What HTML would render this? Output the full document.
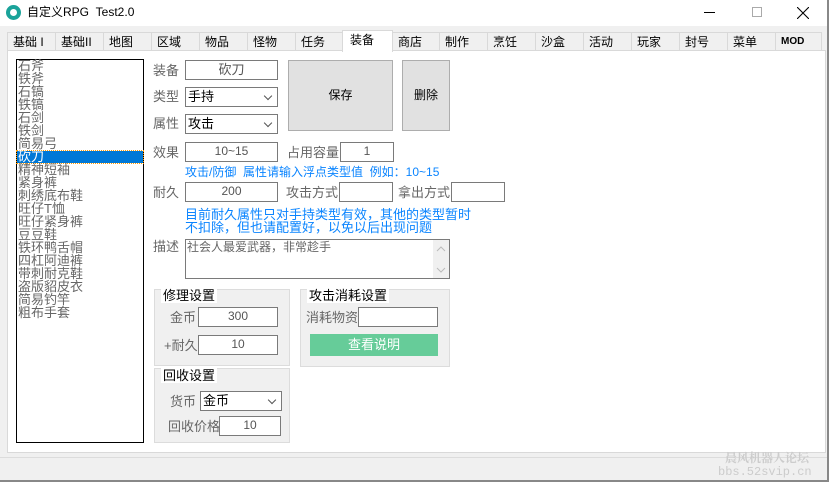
<!DOCTYPE html>
<html><head><meta charset="utf-8"><style>
*{margin:0;padding:0;box-sizing:border-box}
body{width:829px;height:482px;background:#f0f0f0;position:relative;overflow:hidden;font-family:"Liberation Sans","Noto Sans CJK SC","WenQuanYi Zen Hei",sans-serif;font-size:12px;color:#000}
.a{position:absolute}
.t{position:absolute;white-space:nowrap;line-height:14px}
.g{color:#666}
.in{position:absolute;background:#fff;border:1px solid #7a7a7a;text-align:center;color:#555;line-height:17px;font-size:12px}
.sel{position:absolute;background:#fff;border:1px solid #7a7a7a;padding-left:2px;line-height:17px;font-size:13px}
.sel:after{content:"";position:absolute;right:6px;top:5px;width:5px;height:5px;border-right:1px solid #555;border-bottom:1px solid #555;transform:rotate(45deg)}
.tab{position:absolute;top:32px;height:19px;border:1px solid #d9d9d9;border-bottom:none;background:#f0f0f0;padding-left:5px;line-height:18px;font-size:12px}
.blue{color:#0a84ff}
.grp{position:absolute;background:#f0f0f0;border:1px solid #dcdcdc}
.gt{position:absolute;background:#fff;font-size:13px;padding:0 2px;line-height:15px}
.li{position:absolute;left:18px;font-size:13px;line-height:13px;height:13px;color:#666;white-space:nowrap}
</style></head><body>
<div class="a" style="left:0;top:0;width:829px;height:26px;background:#fff"></div>
<div class="a" style="left:6px;top:5px;width:15px;height:15px;border-radius:50%;background:#1aa39a"></div>
<div class="a" style="left:10px;top:9px;width:7px;height:7px;border-radius:50%;background:#fff"></div>
<div class="t" style="left:27px;top:5px;font-size:12px">自定义RPG&nbsp;&nbsp;Test2.0</div>
<div class="a" style="left:704px;top:12px;width:11px;height:1px;background:#000"></div>
<div class="a" style="left:752px;top:7px;width:10px;height:10px;border:1px solid #aaa"></div>
<svg class="a" style="left:797px;top:7px" width="12" height="12"><path d="M0 0L12 12M12 0L0 12" stroke="#000" stroke-width="1.1"/></svg>
<div class="a" style="left:0;top:26px;width:829px;height:456px;background:#f0f0f0"></div>
<div class="tab" style="left:7px;width:49px">基础 I</div>
<div class="tab" style="left:55px;width:49px">基础II</div>
<div class="tab" style="left:103px;width:49px">地图</div>
<div class="tab" style="left:151px;width:49px">区域</div>
<div class="tab" style="left:199px;width:49px">物品</div>
<div class="tab" style="left:247px;width:49px">怪物</div>
<div class="tab" style="left:295px;width:48px">任务</div>
<div class="tab" style="left:392px;width:48px">商店</div>
<div class="tab" style="left:439px;width:49px">制作</div>
<div class="tab" style="left:487px;width:49px">烹饪</div>
<div class="tab" style="left:535px;width:49px">沙盒</div>
<div class="tab" style="left:583px;width:49px">活动</div>
<div class="tab" style="left:631px;width:49px">玩家</div>
<div class="tab" style="left:679px;width:49px">封号</div>
<div class="tab" style="left:727px;width:49px">菜单</div>
<div class="tab" style="left:775px;width:47px;font-size:10px;font-weight:bold">MOD</div>
<div class="a" style="left:7px;top:50px;width:819px;height:403px;background:#fff;border:1px solid #d9d9d9"></div>
<div class="tab" style="left:342px;top:30px;width:51px;height:22px;background:#fff;border-color:#d9d9d9;padding-left:7px">装备</div>
<div class="a" style="left:16px;top:59px;width:128px;height:384px;border:1px solid #000;background:#fff"></div>
<div class="li" style="top:59px">石斧</div>
<div class="li" style="top:72px">铁斧</div>
<div class="li" style="top:85px">石镐</div>
<div class="li" style="top:98px">铁镐</div>
<div class="li" style="top:111px">石剑</div>
<div class="li" style="top:124px">铁剑</div>
<div class="li" style="top:137px">简易弓</div>
<div class="a" style="left:17px;top:151px;width:126px;height:12px;background:#0078d7;outline:1px dotted #f90"></div>
<div class="li" style="top:150px;color:#fff">砍刀</div>
<div class="li" style="top:163px">精神短袖</div>
<div class="li" style="top:176px">紧身裤</div>
<div class="li" style="top:189px">刺绣底布鞋</div>
<div class="li" style="top:202px">旺仔T恤</div>
<div class="li" style="top:215px">旺仔紧身裤</div>
<div class="li" style="top:228px">豆豆鞋</div>
<div class="li" style="top:241px">铁环鸭舌帽</div>
<div class="li" style="top:254px">四杠阿迪裤</div>
<div class="li" style="top:267px">带刺耐克鞋</div>
<div class="li" style="top:280px">盗版貂皮衣</div>
<div class="li" style="top:293px">简易钓竿</div>
<div class="li" style="top:306px">粗布手套</div>
<div class="t g" style="left:153px;top:64px;font-size:13px">装备</div>
<div class="in" style="left:185px;top:60px;width:93px;height:20px;font-size:13px">砍刀</div>
<div class="t g" style="left:153px;top:90px;font-size:13px">类型</div>
<div class="sel" style="left:185px;top:87px;width:93px;height:20px">手持</div>
<div class="t g" style="left:153px;top:117px;font-size:13px">属性</div>
<div class="sel" style="left:185px;top:114px;width:93px;height:20px">攻击</div>
<div class="a" style="left:288px;top:60px;width:105px;height:71px;background:#e1e1e1;border:1px solid #adadad;text-align:center;line-height:69px">保存</div>
<div class="a" style="left:402px;top:60px;width:48px;height:71px;background:#e1e1e1;border:1px solid #adadad;text-align:center;line-height:69px">删除</div>
<div class="t g" style="left:153px;top:146px;font-size:13px">效果</div>
<div class="in" style="left:185px;top:142px;width:93px;height:20px">10~15</div>
<div class="t g" style="left:287px;top:146px;font-size:13px">占用容量</div>
<div class="in" style="left:340px;top:142px;width:54px;height:20px">1</div>
<div class="t blue" style="left:185px;top:165px">攻击/防御&nbsp; 属性请输入浮点类型值&nbsp; 例如：10~15</div>
<div class="t g" style="left:153px;top:186px;font-size:13px">耐久</div>
<div class="in" style="left:185px;top:182px;width:93px;height:20px">200</div>
<div class="t g" style="left:286px;top:186px;font-size:13px">攻击方式</div>
<div class="in" style="left:339px;top:182px;width:54px;height:20px"></div>
<div class="t g" style="left:398px;top:186px;font-size:13px">拿出方式</div>
<div class="in" style="left:451px;top:182px;width:54px;height:20px"></div>
<div class="t blue" style="left:185px;top:208px;font-size:13px;line-height:13px">目前耐久属性只对手持类型有效，其他的类型暂时<br>不扣除，但也请配置好，以免以后出现问题</div>
<div class="t g" style="left:153px;top:240px;font-size:13px">描述</div>
<div class="a" style="left:185px;top:239px;width:265px;height:40px;border:1px solid #7a7a7a;background:#fff"></div>
<div class="t g" style="left:187px;top:240px">社会人最爱武器，非常趁手</div>
<div class="a" style="left:433px;top:240px;width:16px;height:38px;background:#f0f0f0"></div>
<svg class="a" style="left:436px;top:246px" width="10" height="30"><path d="M1 5L5 1L9 5M1 22L5 26L9 22" stroke="#bbb" fill="none"/></svg>
<div class="grp" style="left:154px;top:289px;width:136px;height:77px"></div>
<div class="gt" style="left:161px;top:288px">修理设置</div>
<div class="t g" style="left:170px;top:311px;font-size:13px">金币</div>
<div class="in" style="left:198px;top:307px;width:80px;height:20px">300</div>
<div class="t g" style="left:164px;top:339px;font-size:13px">+耐久</div>
<div class="in" style="left:198px;top:335px;width:80px;height:20px">10</div>
<div class="grp" style="left:300px;top:289px;width:150px;height:78px"></div>
<div class="gt" style="left:307px;top:288px">攻击消耗设置</div>
<div class="t g" style="left:306px;top:311px;font-size:13px">消耗物资</div>
<div class="in" style="left:358px;top:307px;width:80px;height:20px"></div>
<div class="a" style="left:310px;top:334px;width:128px;height:22px;background:#66cc99;color:#fff;text-align:center;line-height:22px;font-size:13px">查看说明</div>
<div class="grp" style="left:154px;top:368px;width:136px;height:75px"></div>
<div class="gt" style="left:161px;top:368px">回收设置</div>
<div class="t g" style="left:170px;top:395px;font-size:13px">货币</div>
<div class="sel" style="left:200px;top:391px;width:82px;height:20px">金币</div>
<div class="t g" style="left:168px;top:420px;font-size:13px">回收价格</div>
<div class="in" style="left:219px;top:416px;width:62px;height:20px">10</div>
<div class="a" style="left:0;top:457px;width:829px;height:1px;background:#dcdcdc"></div>
<div class="t" style="left:725px;top:451px;font-size:12px;color:#ccc;font-weight:bold;font-family:'Noto Serif CJK SC',serif">晨风机器人论坛</div>
<div class="t" style="left:718px;top:465px;font-size:12px;color:#ccc;font-family:'Liberation Mono',monospace">bbs.52svip.cn</div>
<div class="a" style="left:827px;top:0;width:2px;height:482px;background:#888"></div>
<div class="a" style="left:0;top:480px;width:829px;height:2px;background:#888"></div>
</body></html>
